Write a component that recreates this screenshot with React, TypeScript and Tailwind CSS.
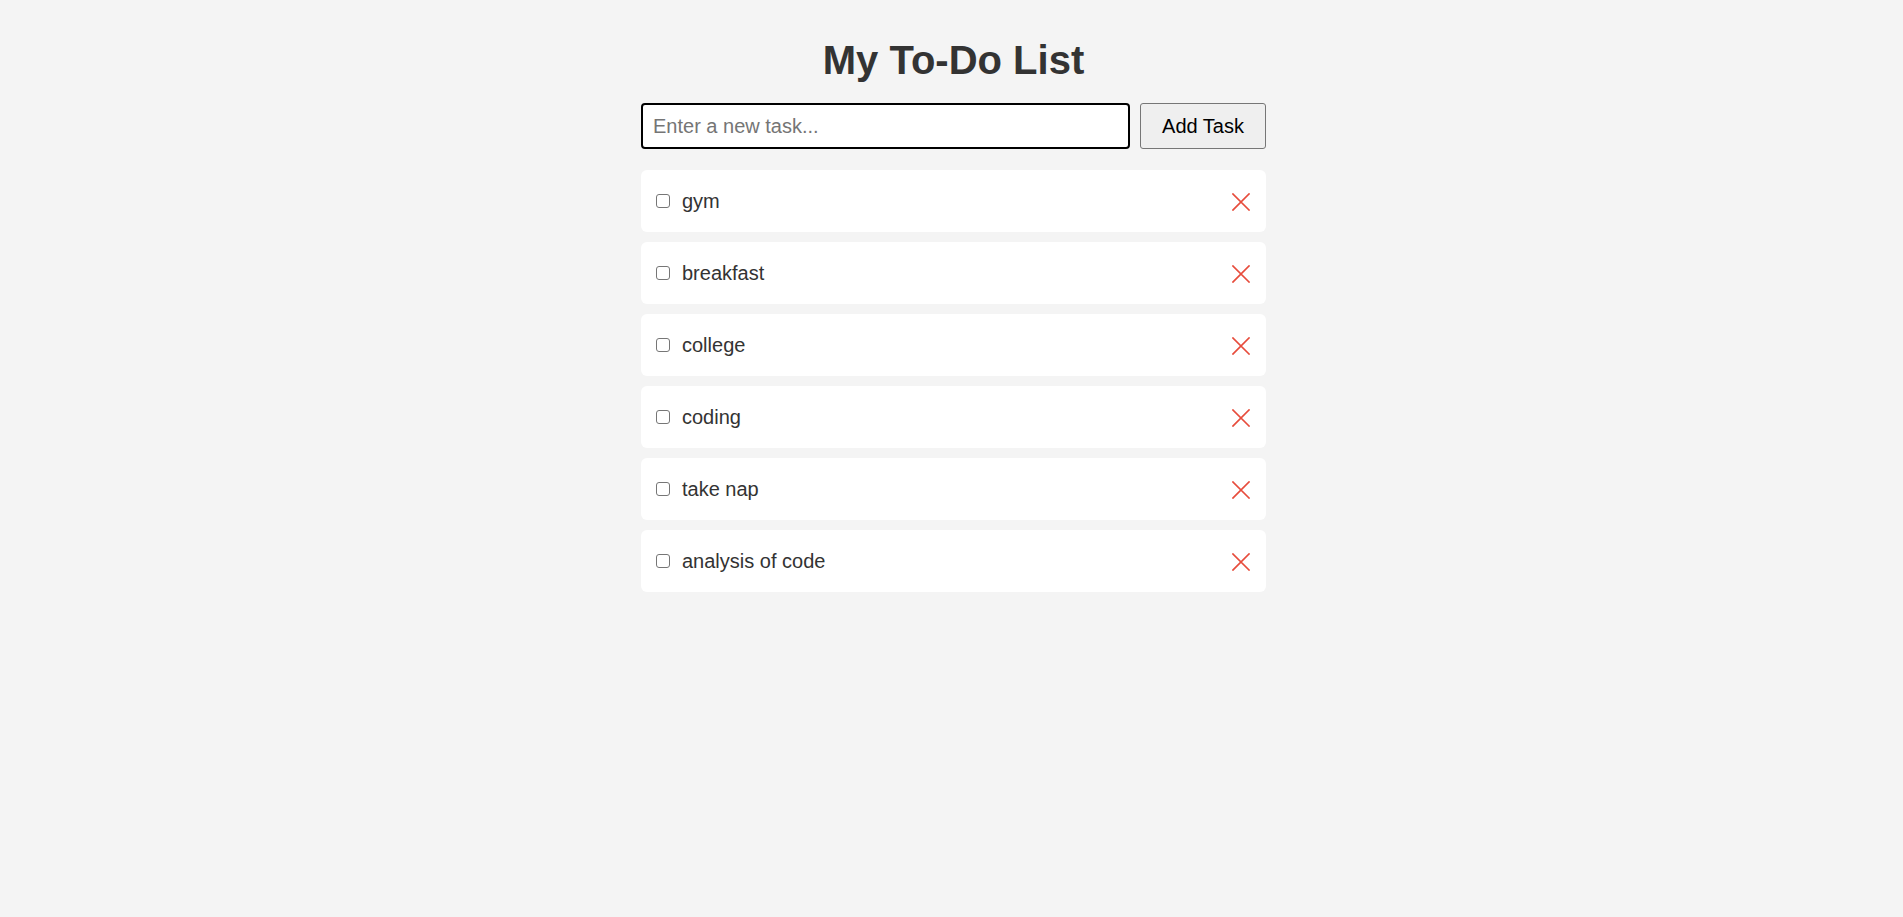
import React from "react";

const tasks = ["gym", "breakfast", "college", "coding", "take nap", "analysis of code"];

function XIcon() {
  return (
    <svg width="18" height="18" viewBox="0 0 18 18" fill="none">
      <path d="M1 1 L17 17 M17 1 L1 17" stroke="#e74c3c" strokeWidth="1.7" strokeLinecap="square" />
    </svg>
  );
}

export default function App() {
  return (
    <div
      className="min-h-screen w-full bg-[#f4f4f4] flex justify-center pl-[4px]"
      style={{ fontFamily: '"Liberation Sans", Arial, sans-serif' }}
    >
      <div className="w-[625px] pt-[37px]">
        <h1 className="text-[40px] leading-[46px] font-bold text-center text-[#333333]">My To-Do List</h1>
        <div className="mt-[20px] flex gap-[10px] h-[46px]">
          <input
            type="text"
            placeholder="Enter a new task..."
            className="flex-1 min-w-0 h-[46px] border-2 border-black rounded-[4px] bg-white px-[10px] text-[20px] text-black placeholder:text-[#757575] outline-none"
          />
          <button className="w-[126px] h-[46px] border border-[#767676] bg-[#efefef] rounded-[3px] text-[20px] text-black">
            Add Task
          </button>
        </div>
        <ul className="mt-[21px] flex flex-col gap-[10px]">
          {tasks.map((t) => (
            <li key={t} className="h-[62px] bg-white rounded-[6px] flex items-center pl-[15px] pr-[16px]">
              <span className="w-[14px] h-[14px] border border-[#767676] rounded-[3px] bg-white shrink-0" />
              <span className="ml-[12px] text-[20px] text-[#333333] leading-[23px]">{t}</span>
              <span className="ml-auto flex items-center mt-[2px]">
                <XIcon />
              </span>
            </li>
          ))}
        </ul>
      </div>
    </div>
  );
}
